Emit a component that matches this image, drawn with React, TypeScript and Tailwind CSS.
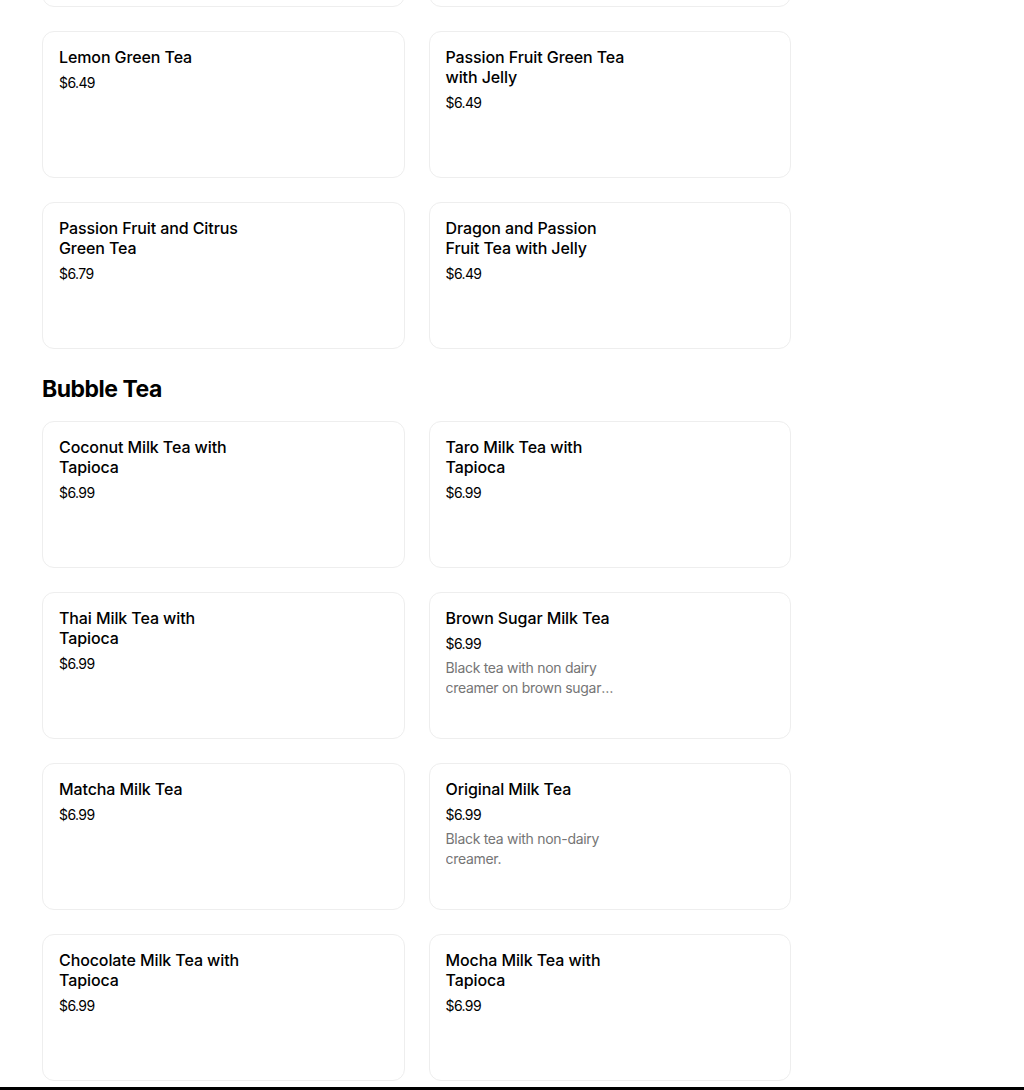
import React from "react";

type Item = { name: string; price: string; desc?: string };

const greenTea: Item[] = [
  { name: "Jasmine Green Tea", price: "$5.99" },
  { name: "Honey Green Tea", price: "$5.99" },
  { name: "Lemon Green Tea", price: "$6.49" },
  { name: "Passion Fruit Green Tea with Jelly", price: "$6.49" },
  { name: "Passion Fruit and Citrus Green Tea", price: "$6.79" },
  { name: "Dragon and Passion Fruit Tea with Jelly", price: "$6.49" },
];

const bubbleTea: Item[] = [
  { name: "Coconut Milk Tea with Tapioca", price: "$6.99" },
  { name: "Taro Milk Tea with Tapioca", price: "$6.99" },
  { name: "Thai Milk Tea with Tapioca", price: "$6.99" },
  {
    name: "Brown Sugar Milk Tea",
    price: "$6.99",
    desc: "Black tea with non dairy creamer on brown sugar syrup with tapioca pearls.",
  },
  { name: "Matcha Milk Tea", price: "$6.99" },
  { name: "Original Milk Tea", price: "$6.99", desc: "Black tea with non-dairy creamer." },
  { name: "Chocolate Milk Tea with Tapioca", price: "$6.99" },
  { name: "Mocha Milk Tea with Tapioca", price: "$6.99" },
];

function MenuCard({ item }: { item: Item }) {
  return (
    <div className="h-[147px] rounded-xl border border-[#eeeeee] bg-white px-4 pt-[15px]">
      <div className="max-w-[189px]">
        <div className="text-[16px] leading-5 font-medium tracking-[-0.1px] text-black">{item.name}</div>
        <div className="mt-[6px] text-[14px] leading-5 tracking-[-0.6px] text-black">{item.price}</div>
        {item.desc && (
          <div className="mt-1 text-[14px] leading-5 tracking-[-0.3px] text-[#757575] line-clamp-2">
            {item.desc}
          </div>
        )}
      </div>
    </div>
  );
}

export default function App() {
  return (
    <div className="min-h-screen bg-white font-['Inter',sans-serif] overflow-hidden">
      <div className="pl-[42px] w-[791px] -mt-[140px]">
        <div className="grid grid-cols-2 gap-6">
          {greenTea.map((item) => (
            <MenuCard key={item.name} item={item} />
          ))}
        </div>

        <h2 className="mt-[24px] mb-[16px] h-8 text-[23px] leading-8 font-bold tracking-[-0.5px] text-black">
          Bubble Tea
        </h2>

        <div className="grid grid-cols-2 gap-6">
          {bubbleTea.map((item) => (
            <MenuCard key={item.name} item={item} />
          ))}
        </div>
      </div>
      <div className="mt-[6px] h-10 bg-black" />
    </div>
  );
}
